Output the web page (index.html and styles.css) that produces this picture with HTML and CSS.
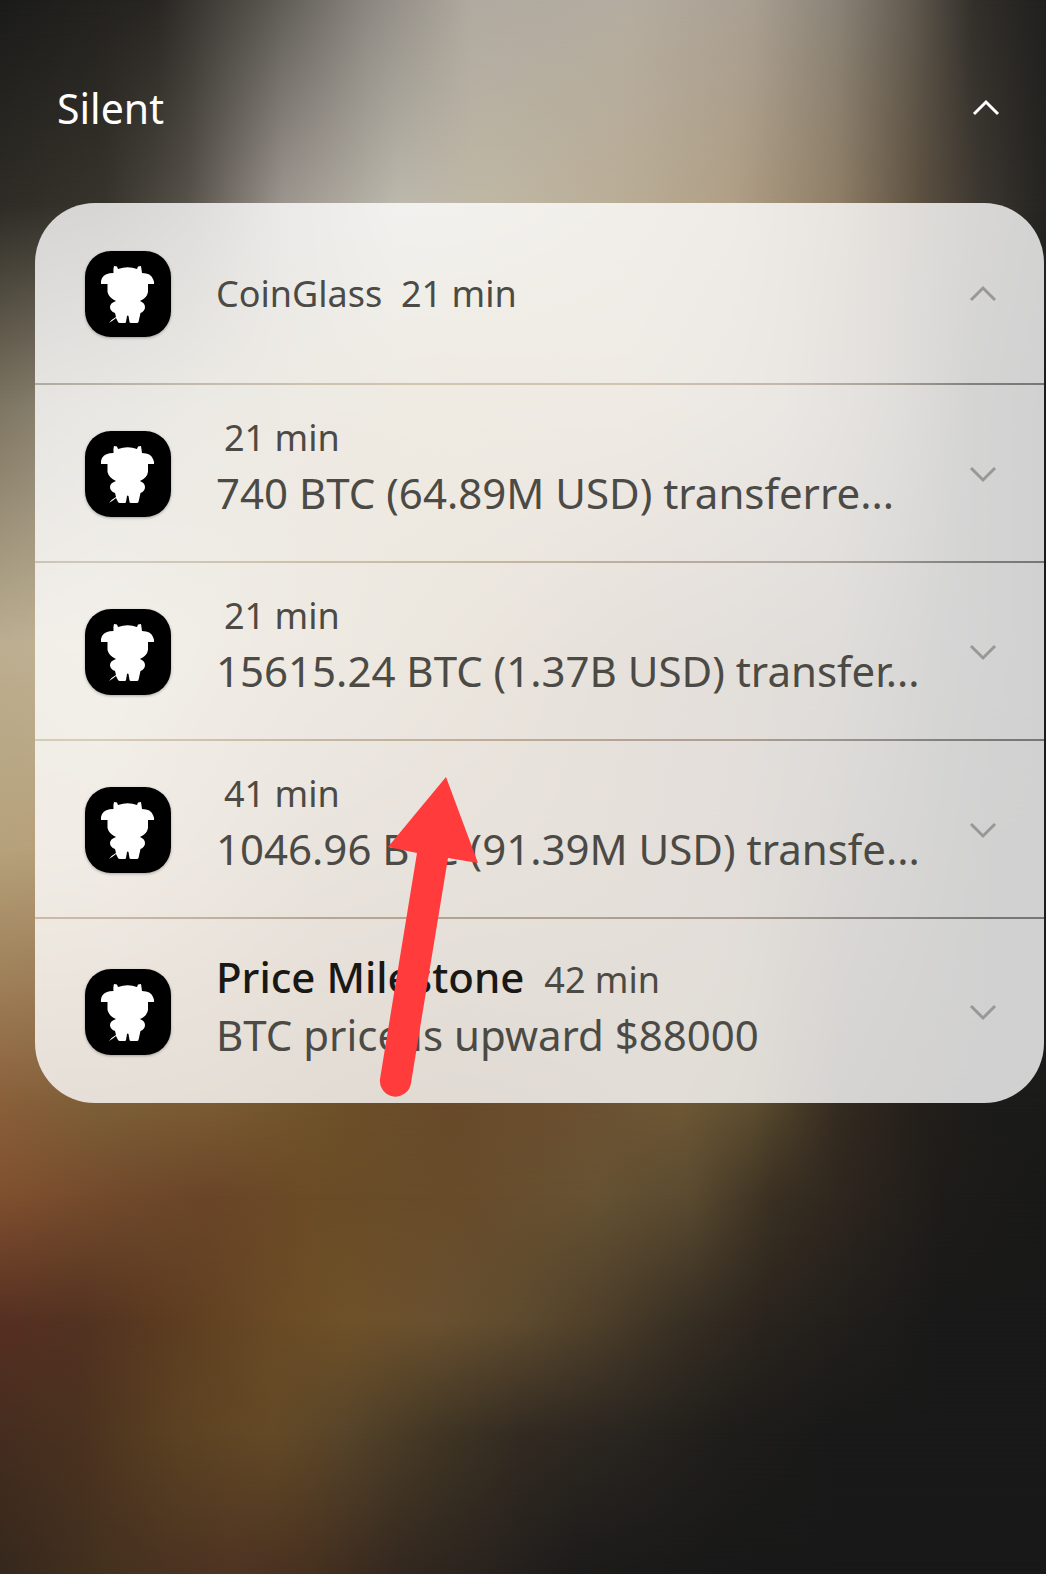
FILE: index.html
```html
<!DOCTYPE html>
<html lang="en">
<head>
    <meta charset="UTF-8">
    <meta name="viewport" content="width=device-width, initial-scale=1.0">
    <title>Notifications</title>
    <link rel="stylesheet" href="styles.css">
</head>
<body>
    <svg class="hidden" aria-hidden="true">
        <symbol id="bull" viewBox="0 0 86 86">
            <path d="M29 15L32 15.500L33 18Q43 14.500 52 18L53 15.500L56 15L57 22Q66 22 68 28Q69.500 31 69 33H63V41Q62 47 55 50Q60 52 60 56Q60 60 55.500 62L53.500 71Q53 72 52 72H46Q44.500 72 44.500 71L43.500 65Q42.500 64 42 65L41 71Q41 72 39.500 72H35Q33.500 72 33 71L31 67L28.500 69L24 72L26.500 69L31 66L30 62Q25 60 25 56Q25 52 31 50Q24 47 22.500 41V33H16Q15.500 30 17 27Q20 22 28.500 22Q28 18 29 15Z" fill="#fff"/>
        </symbol>
        <symbol id="chevron-up" viewBox="0 0 28 18">
            <path d="M2 15L14 3l12 12" fill="none" stroke="currentColor" stroke-width="3"/>
        </symbol>
        <symbol id="chevron-down" viewBox="0 0 28 18">
            <path d="M2 3l12 12L26 3" fill="none" stroke="currentColor" stroke-width="3"/>
        </symbol>
    </svg>

    <div class="wallpaper" aria-hidden="true">
        <div class="band band-1"></div>
        <div class="band band-2"></div>
        <div class="band band-3"></div>
        <div class="band band-4"></div>
        <div class="band band-5"></div>
        <div class="band band-6"></div>
        <div class="band band-7"></div>
        <div class="band band-8"></div>
        <div class="band band-9"></div>
        <div class="band band-10"></div>
    </div>

    <header class="section-header">
        <h1>Silent</h1>
        <button class="toggle toggle-light" aria-label="Collapse silent notifications"><svg><use href="#chevron-up"/></svg></button>
    </header>

    <main class="group">
        <section class="row row-head">
            <svg class="app-icon"><use href="#bull"/></svg>
            <p class="meta">CoinGlass&nbsp; 21 min</p>
            <button class="toggle" aria-label="Collapse CoinGlass"><svg><use href="#chevron-up"/></svg></button>
        </section>
        <article class="row">
            <svg class="app-icon"><use href="#bull"/></svg>
            <div class="content">
                <p class="meta indent">21 min</p>
                <p class="text">740 BTC (64.89M USD) transferre...</p>
            </div>
            <button class="toggle" aria-label="Expand"><svg><use href="#chevron-down"/></svg></button>
        </article>
        <article class="row">
            <svg class="app-icon"><use href="#bull"/></svg>
            <div class="content">
                <p class="meta indent">21 min</p>
                <p class="text">15615.24 BTC (1.37B USD) transfer...</p>
            </div>
            <button class="toggle" aria-label="Expand"><svg><use href="#chevron-down"/></svg></button>
        </article>
        <article class="row">
            <svg class="app-icon"><use href="#bull"/></svg>
            <div class="content">
                <p class="meta indent">41 min</p>
                <p class="text">1046.96 BTC (91.39M USD) transfe...</p>
            </div>
            <button class="toggle" aria-label="Expand"><svg><use href="#chevron-down"/></svg></button>
        </article>
        <article class="row row-last">
            <svg class="app-icon"><use href="#bull"/></svg>
            <div class="content">
                <div class="title-line">
                    <h2>Price Milestone</h2>
                    <span class="meta">42 min</span>
                </div>
                <p class="text">BTC price is upward $88000</p>
            </div>
            <button class="toggle" aria-label="Expand"><svg><use href="#chevron-down"/></svg></button>
        </article>

        <svg class="arrow" viewBox="0 0 92 320" aria-hidden="true">
            <path d="M58 0L90 86L60 81L23 306A15.500 15.500 0 0 1 -8 302L29 76L0 70Z" fill="#ff3b3b"/>
        </svg>
    </main>
</body>
</html>
```

FILE: styles.css
```css
* {
    box-sizing: border-box;
}
body {
    position: relative;
    min-height: 100vh;
    margin: 0;
    background-color: #191919;
    color: #4c4a45;
    font-family: 'Noto Sans', sans-serif;
}
h1, h2, p {
    margin: 0;
}
.hidden {
    display: none;
}

/* wallpaper: each band fades in over the one above it */
.wallpaper {
    position: absolute;
    inset: 0;
    z-index: -1;
    overflow: hidden;
}
.band {
    position: absolute;
    inset: 0;
}
.band-1 {
    background: linear-gradient(90deg, #1b1b19, #282622 15%, #56534d 25%, #8b867f 35%, #b0aaa0 45%, #b5ada0 60%, #a99f92 72%, #8a8377 80%, #625b50 87%, #33302b 93%, #20201e);
}
.band-2 {
    background: linear-gradient(90deg, #2e2c26, #37342c 10%, #57524a 18%, #9c958e 27%, #bcb8ac 38%, #bfb7a3 47%, #b9ac95 60%, #b09f85 70%, #8f7e66 80%, #5c5040 88%, #3b3630 94%, #252421);
    mask-image: linear-gradient(transparent 0, #000 13%);
}
.band-3 {
    background: linear-gradient(90deg, #7f7663, #8c8473 6%, #a3977c 20%, #af9a70 40%, #b09878 60%, #998575 75%, #6b6253 85%, #2c2c2a 93%, #1b1b1b);
    mask-image: linear-gradient(transparent 13%, #000 26%);
}
.band-4 {
    background: linear-gradient(90deg, #bcae90, #c2b498 10%, #b09c78 25%, #9b8058 45%, #866850 60%, #645848 80%, #333230 90%, #1b1b1b);
    mask-image: linear-gradient(transparent 26%, #000 41%);
}
.band-5 {
    background: linear-gradient(90deg, #b5a27a, #b89c7c 10%, #947858 30%, #8a6c50 50%, #785c48 70%, #3c3830 85%, #1d1d1c 95%);
    mask-image: linear-gradient(transparent 41%, #000 54%);
}
.band-6 {
    background: linear-gradient(90deg, #8a5f3a, #7c5f38 10%, #7a5c33 20%, #6e5029 32%, #684a2a 43%, #6b5030 55%, #6e5835 65%, #5e4e30 72%, #352b20 80%, #241f1b 88%, #1b1b19 95%);
    mask-image: linear-gradient(transparent 54%, #000 70%);
}
.band-7 {
    background: linear-gradient(90deg, #80502f, #70492b 12%, #6b4528 20%, #6a4c26 30%, #684c2b 45%, #665233 57%, #5a4a30 66%, #3a3022 74%, #2c241e 82%, #1e1c19 90%, #191918);
    mask-image: linear-gradient(transparent 70%, #000 76%);
}
.band-8 {
    background: linear-gradient(90deg, #562f22, #523221 8%, #5c3c20 16%, #694a25 26%, #6f5128 33%, #695030 42%, #5d4a2e 50%, #4e3f2a 57%, #393024 65%, #2a241e 73%, #201e1b 82%, #191919 90%);
    mask-image: linear-gradient(transparent 76%, #000 84%);
}
.band-9 {
    background: linear-gradient(90deg, #452d1f, #4b321f 8%, #5c4222 17%, #644a26 26%, #57442a 33%, #413624 42%, #332b22 50%, #292520 60%, #1e1d1a 70%, #191919 80%);
    mask-image: linear-gradient(transparent 84%, #000 91%);
}
.band-10 {
    background: linear-gradient(90deg, #35281d, #44311f 10%, #4f3423 22%, #46301f 30%, #33281f 38%, #28221e 47%, #1c1b1a 55%, #181818 70%);
    mask-image: linear-gradient(transparent 91%, #000 100%);
}

.section-header {
    display: flex;
    justify-content: space-between;
    align-items: center;
    padding: 80px 40px 67px 57px;
}
.section-header h1 {
    color: #fff;
    font-size: 41px;
    font-weight: 400;
    line-height: 56px;
}
.toggle {
    display: flex;
    justify-content: center;
    align-items: center;
    flex: none;
    width: 40px;
    height: 40px;
    padding: 0;
    border: none;
    background: none;
    color: #999896;
    cursor: pointer;
}
.toggle svg {
    width: 28px;
    height: 18px;
}
.toggle-light {
    color: #fff;
}

.group {
    position: relative;
    margin: 0 2px 0 35px;
    border-radius: 60px;
    overflow: hidden;
}
.row {
    display: flex;
    align-items: center;
    height: 178px;
    padding: 2px 41px 0 50px;
    border-bottom: 2px solid rgba(255, 255, 255, 0.4);
    background-color: rgba(255, 255, 255, 0.8);
    background-clip: padding-box;
}
.row-head {
    height: 182px;
}
.row-last {
    height: 184px;
    border-bottom: none;
}
.app-icon {
    flex: none;
    width: 86px;
    height: 86px;
    margin-right: 45px;
    border-radius: 26px;
    background-color: #000;
    box-shadow: 0 1px 3px rgba(0, 0, 0, 0.3);
}
.row > .meta, .content {
    flex: 1;
    min-width: 0;
}
.content {
    padding-bottom: 16px;
}
.row-last .content {
    padding-bottom: 12px;
}
.meta {
    font-size: 36px;
    line-height: 54px;
    white-space: nowrap;
}
.indent {
    padding-left: 8px;
}
.text {
    font-size: 42px;
    line-height: 56px;
    white-space: nowrap;
}
.title-line {
    display: flex;
    align-items: baseline;
    gap: 20px;
}
.title-line h2 {
    color: #191815;
    font-size: 42px;
    font-weight: 500;
    line-height: 56px;
}

/* red pointer drawn over the list */
.arrow {
    position: absolute;
    top: 574px;
    left: 353px;
    width: 92px;
    height: 320px;
    overflow: visible;
}
```
